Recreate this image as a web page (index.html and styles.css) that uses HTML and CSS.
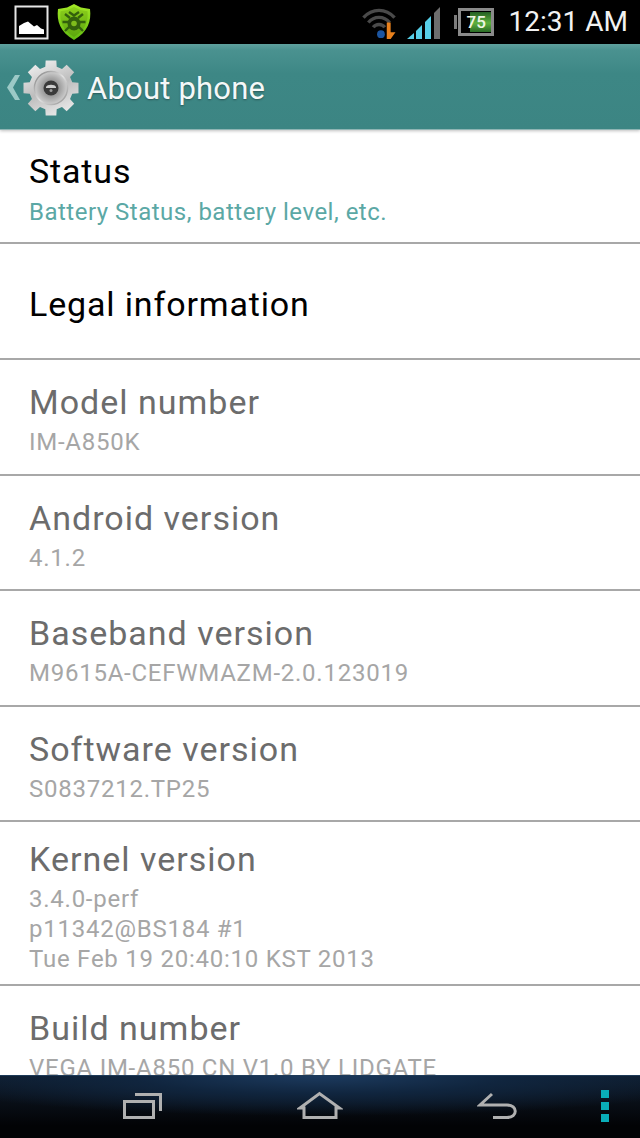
FILE: index.html
```html
<!DOCTYPE html>
<html lang="en">
<head>
<meta charset="utf-8">
<title>About phone</title>
<link rel="stylesheet" href="styles.css">
</head>
<body>
<div class="phone">
  <header class="status-bar">
    <div class="notif">
      <svg class="ic-pic" width="35" height="35" viewBox="0 0 35 35"><rect x="1.5" y="1.5" width="32" height="32" fill="#000" stroke="#e6e6e6" stroke-width="2"/><path d="M5 29V21L10 18L14 16.500L20 21.500L23 20L27 23.500L30 24.500V29Z" fill="#fff"/></svg>
      <svg class="ic-shield" width="36" height="38" viewBox="0 0 36 38">
        <defs>
          <linearGradient id="sg" x1="0" y1="0" x2="0" y2="1"><stop offset="0" stop-color="#a4e826"/><stop offset="1" stop-color="#62bb10"/></linearGradient>
          <linearGradient id="si" x1="0" y1="0" x2="0" y2="1"><stop offset="0" stop-color="#8ccf1c"/><stop offset="1" stop-color="#5ca60e"/></linearGradient>
        </defs>
        <path d="M18 1L25 4.500L34 6C35.500 18 32 29 18 37C4 29 0.500 18 2 6L11 4.500Z" fill="url(#sg)"/>
        <path d="M18 4L24.500 7L31.500 8.200C32.500 18 29.500 27 18 34C6.500 27 3.500 18 4.500 8.200L11.500 7Z" fill="url(#si)"/>
        <path d="M9 11L14 15M27 11L22 15M6.500 19H12M29.500 19H24M9 28L13.500 23.500M27 28L22.500 23.500M13 9L18 12.500L23 9" stroke="#33610c" stroke-width="2.400" fill="none"/>
        <ellipse cx="18" cy="20.500" rx="6.500" ry="7" fill="#33610c"/>
        <circle cx="18" cy="20.500" r="2.800" fill="#7fbc1c"/>
      </svg>
    </div>
    <div class="sys">
      <svg class="ic-wifi" width="38" height="33" viewBox="0 0 38 34">
        <path d="M3 12C12 2 26 2 35 12" stroke="#4a4a4a" stroke-width="3.500" fill="none"/>
        <path d="M8 17C14 10 24 10 30 17" stroke="#4a4a4a" stroke-width="3.500" fill="none"/>
        <path d="M13 22C16 18 22 18 25 22" stroke="#4a4a4a" stroke-width="3.500" fill="none"/>
        <circle cx="21" cy="29" r="4" fill="#1c55a0"/>
        <path d="M27 17H31V27H36L31 34H27Z" fill="#e8801c"/>
      </svg>
      <svg class="ic-signal" width="34" height="34" viewBox="0 0 34 34">
        <path d="M0 33L7 27V33Z" fill="#57cfe8"/>
        <path d="M9 25L15 19V33H9Z" fill="#57cfe8"/>
        <path d="M18 16L24 10V33H18Z" fill="#57cfe8"/>
        <path d="M27 7L33 1V33H27Z" fill="#6e6e6e"/>
      </svg>
      <div class="battery">
        <span class="bat-nub"></span>
        <span class="bat-body"><span class="bat-fill">75</span></span>
      </div>
      <span class="clock">12:31 AM</span>
    </div>
  </header>
  <div class="action-bar">
    <svg class="ic-back" width="13" height="25" viewBox="0 0 13 25"><path d="M8 0H13L6 12.500L13 25H8L0 12.500Z" fill="#9cc9c6"/></svg>
    <svg class="ic-gear" width="56" height="56" viewBox="0 0 56 56">
      <defs>
        <linearGradient id="gg" gradientUnits="userSpaceOnUse" x1="15" y1="0" x2="41" y2="56"><stop offset="0" stop-color="#f0f0f0"/><stop offset="0.500" stop-color="#bdbdbd"/><stop offset="1" stop-color="#ececec"/></linearGradient>
        <linearGradient id="gr" x1="0" y1="0" x2="1" y2="1"><stop offset="0" stop-color="#7a7a7a"/><stop offset="0.500" stop-color="#e2e2e2"/><stop offset="1" stop-color="#8e8e8e"/></linearGradient>
        <radialGradient id="gi"><stop offset="0" stop-color="#6c6c6c"/><stop offset="0.600" stop-color="#a6a6a6"/><stop offset="1" stop-color="#cfcfcf"/></radialGradient>
      </defs>
      <path d="M22.310 6.750L22.660 .51H33.340L33.690 6.750L39 8.950L43.660 4.790L51.210 12.340L47.050 17L49.250 22.310L55.490 22.660V33.340L49.250 33.690L47.050 39L51.210 43.660L43.660 51.210L39 47.050L33.690 49.250L33.340 55.490H22.660L22.310 49.250L17 47.050L12.340 51.210L4.790 43.660L8.950 39L6.750 33.690L.51 33.340V22.660L6.750 22.310L8.950 17L4.790 12.340L12.340 4.790L17 8.950Z" fill="url(#gg)"/>
      <circle cx="28" cy="28" r="16.500" fill="url(#gi)" stroke="url(#gr)" stroke-width="1.500"/>
      <circle cx="28" cy="28" r="7.500" fill="#3a3a3a"/>
      <path d="M23 27C24 24 32 24 33 27L33 28H23Z" fill="#cfcfcf"/>
      <circle cx="28" cy="30.500" r="1.500" fill="#9a9a9a"/>
    </svg>
    <h1 class="title">About phone</h1>
  </div>
  <main class="list">
    <section class="row row-status"><div class="name">Status</div><div class="sub sub-teal">Battery Status, battery level, etc.</div></section>
    <section class="row row-legal"><div class="name">Legal information</div></section>
    <section class="row off"><div class="name">Model number</div><div class="sub">IM-A850K</div></section>
    <section class="row off"><div class="name">Android version</div><div class="sub">4.1.2</div></section>
    <section class="row off"><div class="name">Baseband version</div><div class="sub">M9615A-CEFWMAZM-2.0.123019</div></section>
    <section class="row off"><div class="name">Software version</div><div class="sub">S0837212.TP25</div></section>
    <section class="row off row-kernel"><div class="name">Kernel version</div><div class="sub">3.4.0-perf<br>p11342@BS184 #1<br>Tue Feb 19 20:40:10 KST 2013</div></section>
    <section class="row off row-build"><div class="name">Build number</div><div class="sub">VEGA IM-A850 CN V1.0 BY LIDGATE</div></section>
  </main>
  <nav class="nav-bar">
    <svg class="ic-recent" width="41" height="28" viewBox="0 0 41 28"><path d="M13 2.500H38.500V19M2.500 9.500H31.500V25.500H2.500Z" stroke="#b0b0b0" stroke-width="3" fill="none"/></svg>
    <svg class="ic-home" width="46" height="30" viewBox="0 0 46 30"><path d="M3 17L22.500 2.500L42.500 17H39V26.500H7V17Z" stroke="#b0b0b0" stroke-width="3" fill="none"/></svg>
    <svg class="ic-return" width="40" height="28" viewBox="0 0 40 28"><path d="M15 2L3 13H30C41 13 41 25.500 30 25.500H16" stroke="#b0b0b0" stroke-width="3" fill="none"/></svg>
    <div class="menu-dots"><span></span><span></span><span></span></div>
  </nav>
</div>
</body>
</html>
```
FILE: styles.css
```css
* { box-sizing: border-box; }
html, body { margin: 0; padding: 0; }
body { background: #000; font-family: Roboto, "Liberation Sans", sans-serif; }
.phone { width: 640px; height: 1138px; display: flex; flex-direction: column; overflow: hidden; background: #fff; }

.status-bar { height: 44px; flex: none; background: #000; display: flex; justify-content: space-between; align-items: center; padding: 0 12px 0 14px; }
.notif { display: flex; align-items: center; gap: 7px; }
.sys { display: flex; align-items: center; }
.ic-wifi { margin-right: 9px; }
.ic-signal { margin-right: 13px; margin-top: 2px; }
.battery { display: flex; align-items: center; margin-right: 15px; }
.bat-nub { width: 3px; height: 14px; background: #7c7c7c; margin-right: 1px; }
.bat-body { width: 36px; height: 28px; border: 3px solid #8a8a8a; padding: 1px 0 1px 9px; display: flex; background: #000; }
.bat-fill { flex: 1; background: linear-gradient(#245f22, #5eb13f 55%, #2a6b26); color: #f0f6e6; font-size: 17px; font-weight: 500; line-height: 20px; text-indent: -3px; white-space: nowrap; }
.clock { color: #f2f2f2; font-size: 28px; line-height: 44px; }

.action-bar { height: 86px; flex: none; background: linear-gradient(#5fa19e 0, #4a9290 6px, #3d8785 30px, #3c8583 100%); border-bottom: 1px solid #8fb5b4; display: flex; align-items: center; padding: 2px 0 0 7px; box-shadow: 0 1px 3px rgba(0,0,0,.25); position: relative; }
.ic-back { flex: none; margin-right: 3px; }
.ic-gear { flex: none; margin-right: 8px; }
.title { margin: 2px 0 0; font-size: 31px; font-weight: 400; letter-spacing: 0.2px; color: #f4f8f8; text-shadow: 0 1px 2px rgba(0,0,0,.35); }

.list { flex: 1; min-height: 0; overflow: hidden; }
.row { height: 115.500px; padding: 20px 29px 0; border-bottom: 2px solid #a8a8a8; }
.row-status { height: 114px; padding-top: 19px; }
.row-legal { height: 116px; display: flex; align-items: center; padding-top: 6px; padding-bottom: 0; }
.row-kernel { height: 163.500px; padding-top: 15px; }
.row-build { height: auto; border-bottom: 0; padding-top: 20px; }
.name { font-size: 34px; line-height: 44px; letter-spacing: 0.85px; color: #000; }
.sub { font-size: 24px; line-height: 30px; letter-spacing: 0.75px; color: #a6a6a6; margin-top: 3px; }
.sub-teal { color: #5ba8a5; margin-top: 4px; letter-spacing: 0.5px; }
.off .name { color: #6c6c6c; letter-spacing: 1px; }

.nav-bar { height: 63px; flex: none; display: flex; align-items: flex-start; padding-left: 122px; border-top: 1px solid #1d3a58; background: radial-gradient(ellipse 420px 40px at 50% 0, #1c3a5e 0, #10253e 45%, rgba(12,24,38,0) 100%), linear-gradient(#0e1c2c 0, #090f18 25px, #020305 50px); }
.ic-recent { flex: none; margin-top: 16px; }
.ic-home { flex: none; margin: 15px 0 0 134px; }
.ic-return { flex: none; margin: 16px 0 0 134px; }
.menu-dots { flex: none; margin: 14px 0 0 84px; display: flex; flex-direction: column; gap: 4px; }
.menu-dots span { width: 8px; height: 8px; background: #09aeb9; display: block; }
```
